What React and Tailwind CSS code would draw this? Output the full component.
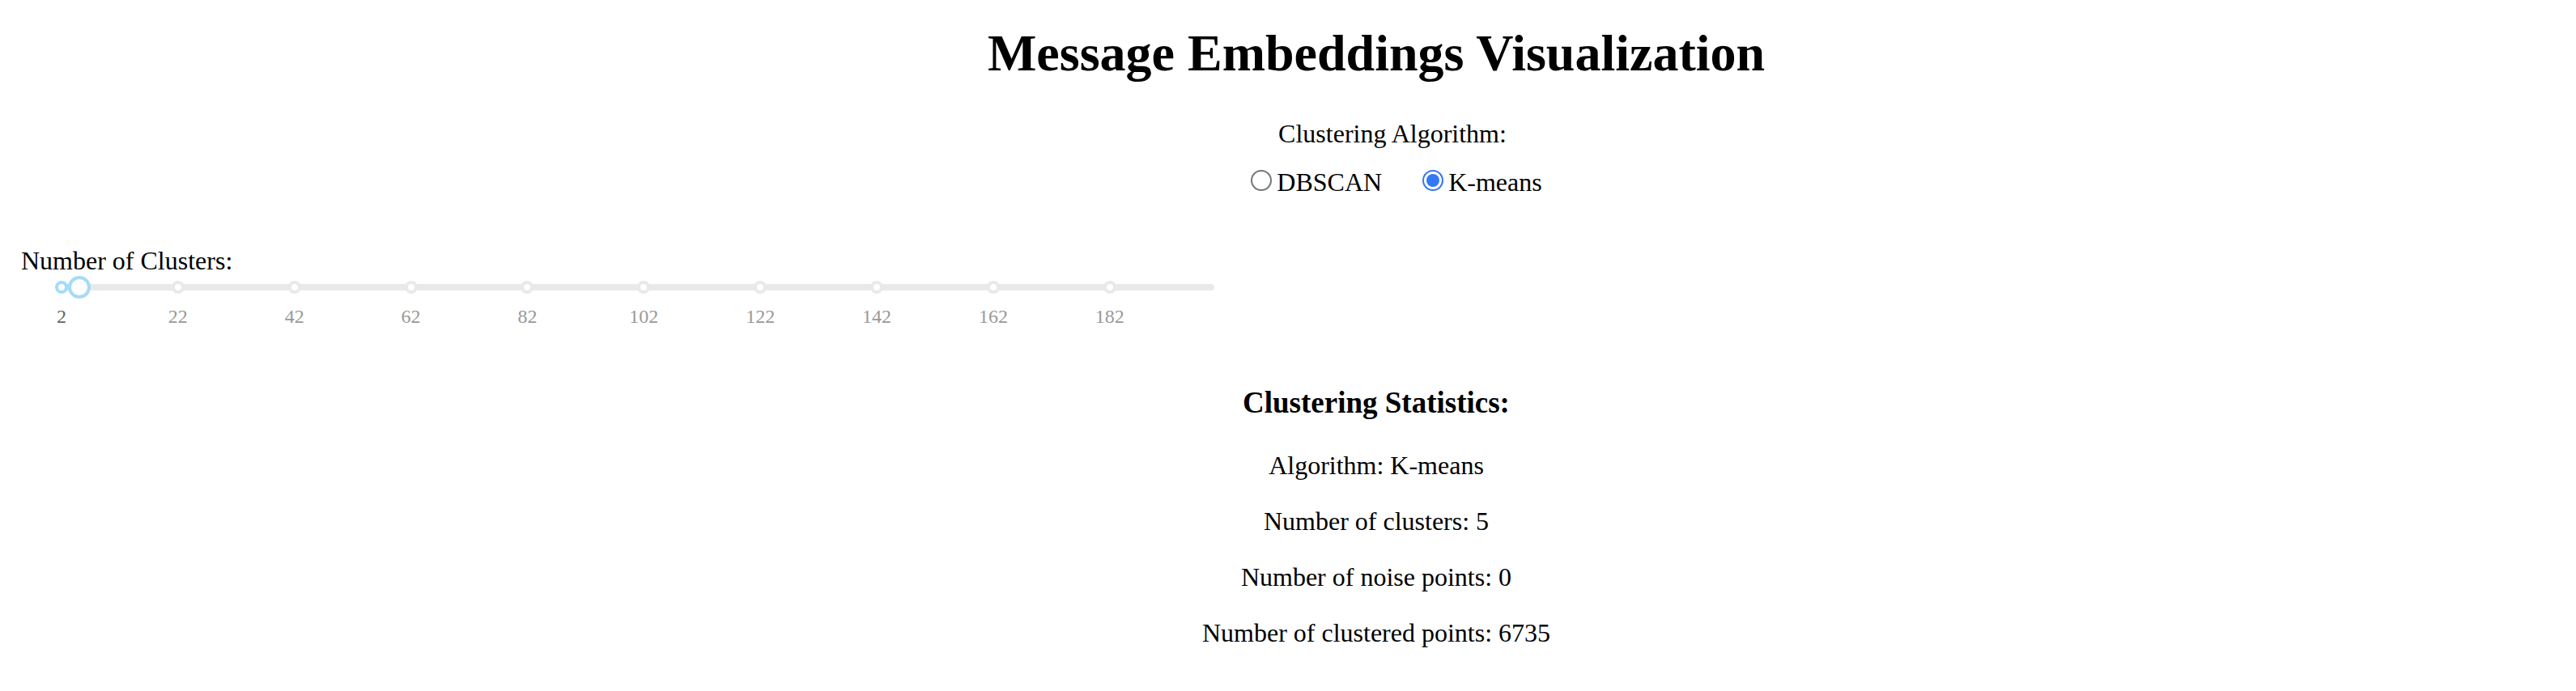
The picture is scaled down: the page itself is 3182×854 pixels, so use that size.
import { useState } from "react";

const MIN = 2;
const MAX = 200;
const MARKS = [2, 22, 42, 62, 82, 102, 122, 142, 162, 182];

const percent = (value) => `${((value - MIN) / (MAX - MIN)) * 100}%`;

function AlgorithmOption({ value, selected, onSelect }) {
  return (
    <label className="flex items-start gap-1.5 cursor-pointer">
      <input
        type="radio"
        name="algorithm"
        value={value}
        checked={selected}
        onChange={() => onSelect(value)}
        className="mt-[3px] size-[26px] shrink-0 appearance-none rounded-full border-2 border-[#767676] bg-white bg-clip-content p-[3px] checked:border-[#3478f6] checked:bg-[#3478f6]"
      />
      {value}
    </label>
  );
}

function ClusterSlider({ value, onChange }) {
  return (
    <section className="w-[48%] pr-[27px]">
      <label htmlFor="clusters" className="block pl-[26px]">
        Number of Clusters:
      </label>
      <div className="relative ml-[76px] h-7">
        <div className="flex h-full items-center">
          <div className="h-2 w-full rounded-full bg-[#e9e9e9]">
            <div
              className="h-full rounded-full bg-[#abe2fb]"
              style={{ width: percent(value) }}
            />
          </div>
        </div>
        {MARKS.map((mark) => (
          <span
            key={mark}
            className={`absolute top-1.5 size-4 -translate-x-1/2 rounded-full border-4 bg-white ${
              mark <= value ? "border-[#a6dafa]" : "border-[#e9e9e9]"
            }`}
            style={{ left: percent(mark) }}
          />
        ))}
        <input
          id="clusters"
          type="range"
          min={MIN}
          max={MAX}
          value={value}
          onChange={(e) => onChange(Number(e.target.value))}
          className="absolute -inset-x-3.5 top-0 h-7 cursor-pointer appearance-none bg-transparent [&::-webkit-slider-thumb]:size-7 [&::-webkit-slider-thumb]:appearance-none [&::-webkit-slider-thumb]:rounded-full [&::-webkit-slider-thumb]:border-4 [&::-webkit-slider-thumb]:border-solid [&::-webkit-slider-thumb]:border-[#a6dafa] [&::-webkit-slider-thumb]:bg-white"
        />
      </div>
      <div className="relative ml-[76px] mt-2 h-7 text-2xl leading-7">
        {MARKS.map((mark) => (
          <span
            key={mark}
            className={`absolute -translate-x-1/2 ${
              mark <= value ? "text-[#666666]" : "text-[#999999]"
            }`}
            style={{ left: percent(mark) }}
          >
            {mark}
          </span>
        ))}
      </div>
    </section>
  );
}

export default function App() {
  const [algorithm, setAlgorithm] = useState("K-means");
  const [clusters, setClusters] = useState(5);

  return (
    <main className="bg-white pt-[29px] pb-6 font-['Liberation_Serif',serif] text-[32px] leading-[37px] text-black">
      <h1 className="pl-[218px] text-center text-[64px] leading-[74px] font-bold">
        Message Embeddings Visualization
      </h1>

      <fieldset className="mt-11 pl-[258px]">
        <legend className="mx-auto">Clustering Algorithm:</legend>
        <div className="mt-[23px] flex justify-center gap-[50px] pl-2.5">
          <AlgorithmOption
            value="DBSCAN"
            selected={algorithm === "DBSCAN"}
            onSelect={setAlgorithm}
          />
          <AlgorithmOption
            value="K-means"
            selected={algorithm === "K-means"}
            onSelect={setAlgorithm}
          />
        </div>
      </fieldset>

      <div className="mt-[60px]">
        <ClusterSlider value={clusters} onChange={setClusters} />
      </div>

      <section className="mt-[72px] flex flex-col gap-8 pl-[218px] text-center">
        <h3 className="mb-1.5 text-[37px] leading-[42px] font-bold">
          Clustering Statistics:
        </h3>
        <p>Algorithm: {algorithm}</p>
        <p>Number of clusters: {clusters}</p>
        <p>Number of noise points: 0</p>
        <p>Number of clustered points: 6735</p>
      </section>
    </main>
  );
}
